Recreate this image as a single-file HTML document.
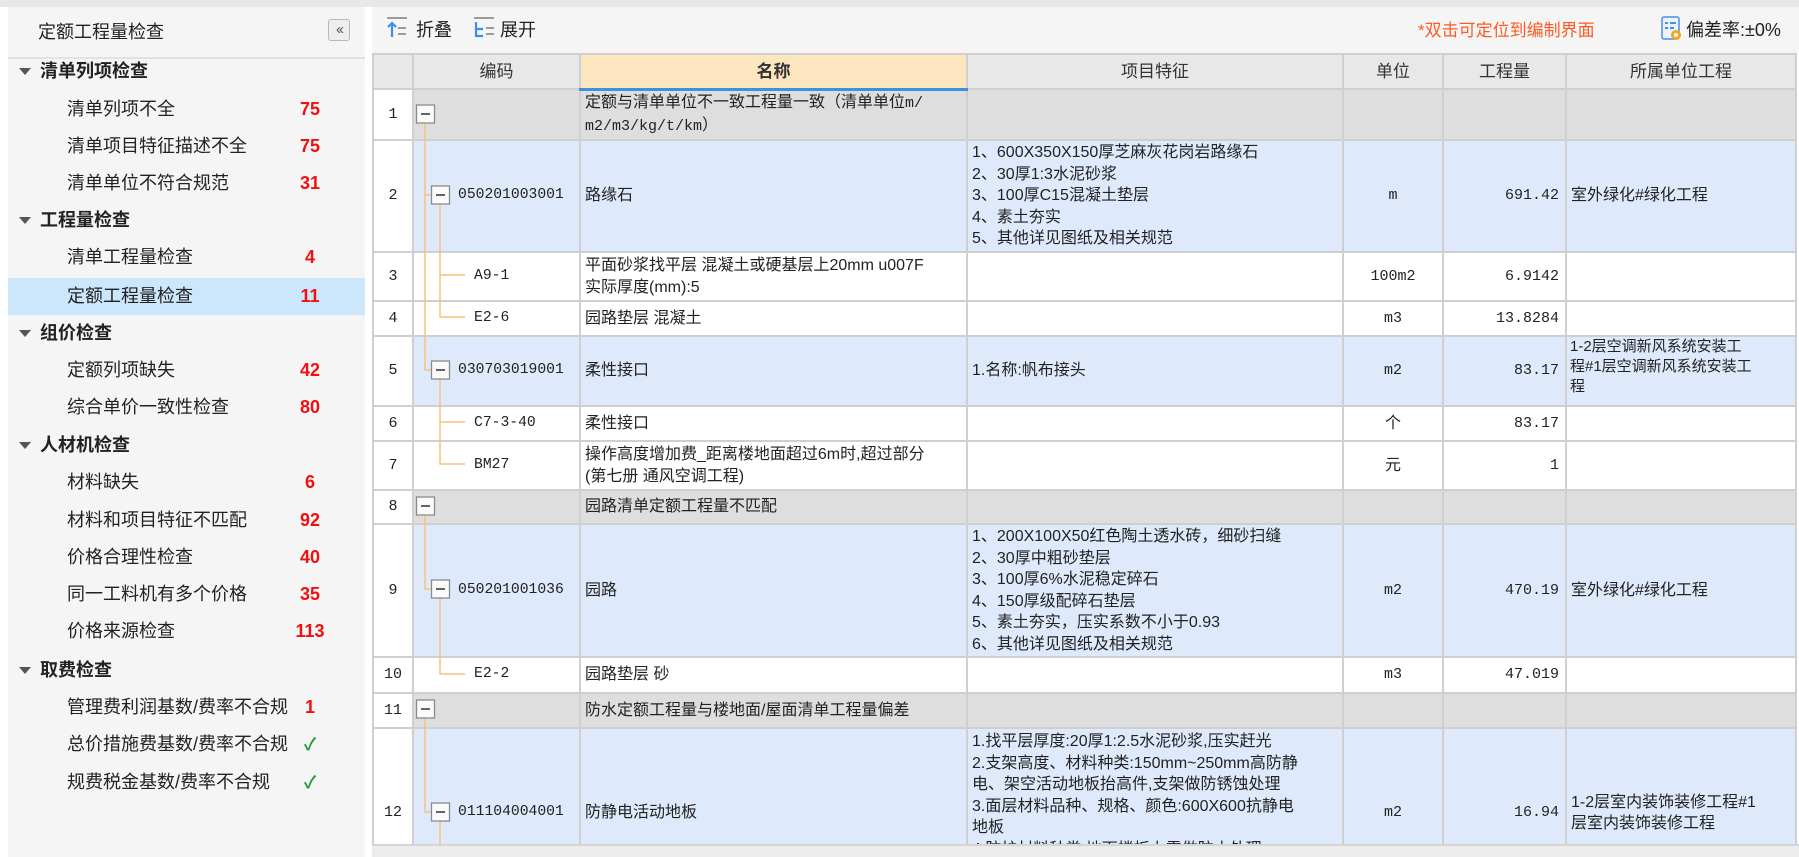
<!DOCTYPE html>
<html><head><meta charset="utf-8">
<style>
*{margin:0;padding:0;box-sizing:border-box}
body{width:1799px;height:857px;overflow:hidden;background:#fff;font-family:"Liberation Sans","Noto Sans CJK SC",sans-serif;color:#222;position:relative}
.abs{position:absolute}
#top{left:0;top:0;width:1799px;height:7px;background:#e8e8e8}
#left{left:8px;top:7px;width:357px;height:850px;background:#f5f5f5}
#left .title{position:absolute;left:30px;top:12px;font-size:18px;line-height:26px}
#left .sep{position:absolute;left:0;top:50px;width:357px;height:2px;background:#e2e2e2}
.coll{position:absolute;left:320px;top:12px;width:22px;height:22px;border:1px solid #b8b8b8;border-radius:3px;background:#eee;font-size:15px;line-height:19px;text-align:center;color:#555;letter-spacing:-2px}
.lr{position:absolute;left:0;width:357px;height:37px;font-size:18px;line-height:37px}
.lr.cat{font-weight:bold}
.lr.cat .tri{position:absolute;left:11px;top:15px;width:0;height:0;border-left:6px solid transparent;border-right:6px solid transparent;border-top:7px solid #555}
.lr.cat span.t{position:absolute;left:32px}
.lr.it span.t{position:absolute;left:59px}
.lr .n{position:absolute;left:282px;width:40px;text-align:center;color:#f01010;font-weight:bold;font-size:18px}
.lr .ck{position:absolute;left:282px;width:40px;text-align:center;color:#1f9a3a;font-weight:bold;font-size:17px}
.sel{background:#cce6fc}
#tb{left:372px;top:7px;width:1427px;height:47px;background:#f5f5f5}
#tbl{left:372px;top:53px;width:1427px;height:791px;overflow:hidden;background:#fff}
table{border-collapse:collapse;table-layout:fixed;width:1423px}
td,th{border:2px solid #cfcfcf;font-size:16px;line-height:21.5px;white-space:nowrap;overflow:hidden;vertical-align:middle}
th{background:#e8e8e8;font-weight:normal;font-size:17px;height:35px;color:#333}
th.nm{background:#fde5bf;font-weight:bold;border-bottom:3px solid #3f90e0}
td{padding:0 4px}
td.rn{background:#fff;text-align:center;font-family:"Liberation Mono",monospace;font-size:15px;padding:0}
td.cd{font-family:"Liberation Mono",monospace;font-size:14.7px;letter-spacing:0;padding:0 0 0 44px}
td.cd.l{padding-left:60px}
td.u{text-align:center}
td.q{text-align:right;font-family:"Liberation Mono",monospace;font-size:15px;padding-right:6px}
tr.g td:not(.rn){background:#dedede}
tr.b td:not(.rn){background:#deeafc}
.mono{font-family:"Liberation Mono",monospace;font-size:15px}
#bot{left:372px;top:844px;width:1427px;height:13px;background:#ececec;border-top:2px solid #d5d5d5}
</style></head><body>
<div id="top" class="abs"></div>
<div id="left" class="abs">
  <div class="title">定额工程量检查</div>
  <div class="coll">&lsaquo;&lsaquo;</div>
  <div class="sep"></div>
  <div class="lr cat" style="top:46px"><i class="tri"></i><span class="t">清单列项检查</span></div>
  <div class="lr it" style="top:84px"><span class="t">清单列项不全</span><span class="n">75</span></div>
  <div class="lr it" style="top:121px"><span class="t">清单项目特征描述不全</span><span class="n">75</span></div>
  <div class="lr it" style="top:158px"><span class="t">清单单位不符合规范</span><span class="n">31</span></div>
  <div class="lr cat" style="top:195px"><i class="tri"></i><span class="t">工程量检查</span></div>
  <div class="lr it" style="top:232px"><span class="t">清单工程量检查</span><span class="n">4</span></div>
  <div class="lr it sel" style="top:271px"><span class="t">定额工程量检查</span><span class="n">11</span></div>
  <div class="lr cat" style="top:308px"><i class="tri"></i><span class="t">组价检查</span></div>
  <div class="lr it" style="top:345px"><span class="t">定额列项缺失</span><span class="n">42</span></div>
  <div class="lr it" style="top:382px"><span class="t">综合单价一致性检查</span><span class="n">80</span></div>
  <div class="lr cat" style="top:420px"><i class="tri"></i><span class="t">人材机检查</span></div>
  <div class="lr it" style="top:457px"><span class="t">材料缺失</span><span class="n">6</span></div>
  <div class="lr it" style="top:495px"><span class="t">材料和项目特征不匹配</span><span class="n">92</span></div>
  <div class="lr it" style="top:532px"><span class="t">价格合理性检查</span><span class="n">40</span></div>
  <div class="lr it" style="top:569px"><span class="t">同一工料机有多个价格</span><span class="n">35</span></div>
  <div class="lr it" style="top:606px"><span class="t">价格来源检查</span><span class="n">113</span></div>
  <div class="lr cat" style="top:645px"><i class="tri"></i><span class="t">取费检查</span></div>
  <div class="lr it" style="top:682px"><span class="t">管理费利润基数/费率不合规</span><span class="n">1</span></div>
  <div class="lr it" style="top:719px"><span class="t">总价措施费基数/费率不合规</span><span class="ck">✓</span></div>
  <div class="lr it" style="top:757px"><span class="t">规费税金基数/费率不合规</span><span class="ck">✓</span></div>
</div>
<div id="tb" class="abs">
  <svg class="abs" style="left:14px;top:9px" width="24" height="24" viewBox="0 0 24 24">
    <rect x="1" y="1" width="20" height="2" fill="#9a9a9a"/>
    <path d="M6 21V8M2 11l4-4 4 4" stroke="#3d8ef0" stroke-width="2.2" fill="none"/>
    <rect x="12" y="11" width="8" height="2" fill="#9a9a9a"/><rect x="12" y="17" width="8" height="2" fill="#9a9a9a"/>
  </svg>
  <div class="abs" style="left:44px;top:11px;font-size:18px;line-height:24px">折叠</div>
  <svg class="abs" style="left:101px;top:9px" width="24" height="24" viewBox="0 0 24 24">
    <rect x="1" y="1" width="20" height="2" fill="#9a9a9a"/>
    <path d="M3 6v14h7M3 13h7" stroke="#3d8ef0" stroke-width="2.2" fill="none"/>
    <rect x="13" y="11" width="8" height="2" fill="#9a9a9a"/><rect x="13" y="17" width="8" height="2" fill="#9a9a9a"/>
  </svg>
  <div class="abs" style="left:128px;top:11px;font-size:18px;line-height:24px">展开</div>
  <div class="abs" style="left:1046px;top:12px;font-size:17px;line-height:24px;color:#ff5a24">*双击可定位到编制界面</div>
  <svg class="abs" style="left:1289px;top:9px" width="22" height="26" viewBox="0 0 22 26">
    <rect x="1" y="1" width="17" height="22" rx="2" fill="#eaf3ff" stroke="#4a90e2" stroke-width="1.5"/>
    <rect x="4" y="6" width="3" height="2" fill="#4a90e2"/><rect x="9" y="6" width="6" height="2" fill="#4a90e2"/>
    <rect x="4" y="11" width="3" height="2" fill="#4a90e2"/><rect x="9" y="11" width="4" height="2" fill="#4a90e2"/>
    <circle cx="15" cy="19" r="5" fill="#f5a623"/><circle cx="15" cy="19" r="2" fill="#fff"/>
  </svg>
  <div class="abs" style="left:1314px;top:11px;font-size:18px;line-height:24px">偏差率:±0%</div>
</div>
<div id="tbl" class="abs">
<table>
<colgroup><col style="width:40px"><col style="width:167px"><col style="width:387px"><col style="width:376px"><col style="width:100px"><col style="width:123px"><col style="width:230px"></colgroup>
<tr><th></th><th>编码</th><th class="nm">名称</th><th>项目特征</th><th>单位</th><th>工程量</th><th>所属单位工程</th></tr>
<tr class="g" style="height:51px"><td class="rn">1</td><td></td><td>定额与清单单位不一致工程量一致（清单单位<span class="mono">m/</span><br><span class="mono">m2/m3/kg/t/km</span>）</td><td></td><td></td><td></td><td></td></tr>
<tr class="b" style="height:112px"><td class="rn">2</td><td class="cd">050201003001</td><td>路缘石</td><td>1、600X350X150厚芝麻灰花岗岩路缘石<br>2、30厚1:3水泥砂浆<br>3、100厚C15混凝土垫层<br>4、素土夯实<br>5、其他详见图纸及相关规范</td><td class="u mono">m</td><td class="q">691.42</td><td>室外绿化#绿化工程</td></tr>
<tr style="height:49px"><td class="rn">3</td><td class="cd l">A9-1</td><td>平面砂浆找平层 混凝土或硬基层上20mm u007F<br>实际厚度(mm):5</td><td></td><td class="u mono">100m2</td><td class="q">6.9142</td><td></td></tr>
<tr style="height:35px"><td class="rn">4</td><td class="cd l">E2-6</td><td>园路垫层 混凝土</td><td></td><td class="u mono">m3</td><td class="q">13.8284</td><td></td></tr>
<tr class="b" style="height:70px"><td class="rn">5</td><td class="cd">030703019001</td><td>柔性接口</td><td>1.名称:帆布接头</td><td class="u mono">m2</td><td class="q">83.17</td><td style="vertical-align:top;font-size:15px;line-height:20px;padding:0 3px">1-2层空调新风系统安装工<br>程#1层空调新风系统安装工<br>程</td></tr>
<tr style="height:35px"><td class="rn">6</td><td class="cd l">C7-3-40</td><td>柔性接口</td><td></td><td class="u">个</td><td class="q">83.17</td><td></td></tr>
<tr style="height:49px"><td class="rn">7</td><td class="cd l">BM27</td><td>操作高度增加费_距离楼地面超过6m时,超过部分<br>(第七册 通风空调工程)</td><td></td><td class="u">元</td><td class="q">1</td><td></td></tr>
<tr class="g" style="height:34px"><td class="rn">8</td><td></td><td>园路清单定额工程量不匹配</td><td></td><td></td><td></td><td></td></tr>
<tr class="b" style="height:133px"><td class="rn">9</td><td class="cd">050201001036</td><td>园路</td><td>1、200X100X50红色陶土透水砖，细砂扫缝<br>2、30厚中粗砂垫层<br>3、100厚6%水泥稳定碎石<br>4、150厚级配碎石垫层<br>5、素土夯实，压实系数不小于0.93<br>6、其他详见图纸及相关规范</td><td class="u mono">m2</td><td class="q">470.19</td><td>室外绿化#绿化工程</td></tr>
<tr style="height:36px"><td class="rn">10</td><td class="cd l">E2-2</td><td>园路垫层 砂</td><td></td><td class="u mono">m3</td><td class="q">47.019</td><td></td></tr>
<tr class="g" style="height:35px"><td class="rn">11</td><td></td><td>防水定额工程量与楼地面/屋面清单工程量偏差</td><td></td><td></td><td></td><td></td></tr>
<tr class="b" style="height:170px"><td class="rn">12</td><td class="cd">011104004001</td><td>防静电活动地板</td><td style="vertical-align:top;padding-top:2px">1.找平层厚度:20厚1:2.5水泥砂浆,压实赶光<br>2.支架高度、材料种类:150mm~250mm高防静<br>电、架空活动地板抬高件,支架做防锈蚀处理<br>3.面层材料品种、规格、颜色:600X600抗静电<br>地板<br>4.防护材料种类:地面楼板上需做防水处理<br>5.其他详见图纸及相关规范</td><td class="u mono">m2</td><td class="q">16.94</td><td>1-2层室内装饰装修工程#1<br>层室内装饰装修工程</td></tr>
</table>
<svg class="abs" style="left:0;top:0" width="220" height="800" viewBox="372 53 220 800">
<g stroke="#f7c27f" stroke-width="1.5" fill="none">
<path d="M425 122V370H431M425 195H431"/>
<path d="M425 515V589H431"/>
<path d="M425 718V812H431"/>
<path d="M440 204V317H465M440 275H465"/>
<path d="M440 379V464H465M440 422H465"/>
<path d="M440 598V674H465"/>
<path d="M440 821V860"/>
</g>
<g fill="#fbfbfb" stroke="#8a8a8a" stroke-width="1.3">
<rect x="416.5" y="105" width="18" height="18"/>
<rect x="431.5" y="186" width="18" height="18"/>
<rect x="431.5" y="361" width="18" height="18"/>
<rect x="416.5" y="497" width="18" height="18"/>
<rect x="431.5" y="580" width="18" height="18"/>
<rect x="416.5" y="700" width="18" height="18"/>
<rect x="431.5" y="803" width="18" height="18"/>
</g>
<g stroke="#333" stroke-width="1.5">
<path d="M421 114h9M436 195h9M436 370h9M421 506h9M436 589h9M421 709h9M436 812h9"/>
</g>
</svg>
</div>
<div id="bot" class="abs"></div>
</body></html>
